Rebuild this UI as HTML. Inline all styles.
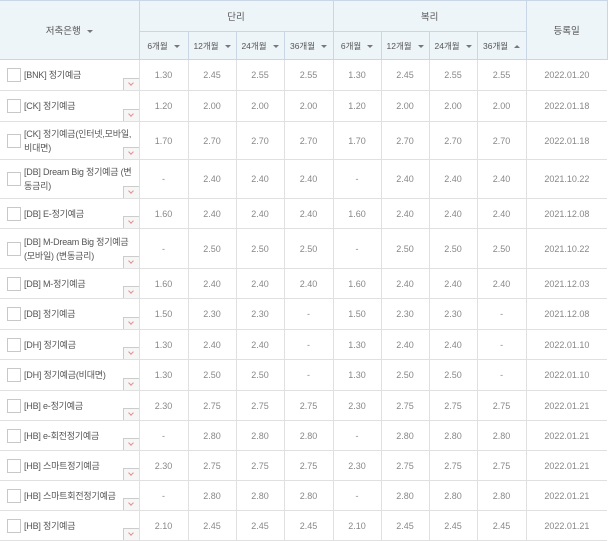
<!DOCTYPE html>
<html><head><meta charset="utf-8"><style>
*{margin:0;padding:0;box-sizing:border-box}
body{width:612px;height:541px;overflow:hidden;background:#fff;font-family:"Liberation Sans","Noto Sans CJK KR",sans-serif}
table{position:absolute;left:0;top:0;width:607px;border-collapse:collapse;table-layout:fixed}
th{background:#eef5f8;border:1px solid #c8d6e6;font-weight:normal;font-size:9.5px;color:#555}
th.s{font-size:8.5px}
.ar{display:inline-block;width:0;height:0;border-left:3px solid transparent;border-right:3px solid transparent;border-top:3px solid #777;vertical-align:middle;margin-left:6px}
.up{border-top:none;border-bottom:3px solid #777}
td{border:1px solid #e0e0e0;text-align:center;font-size:9px;color:#888;position:relative;overflow:hidden}
td.n{text-align:left;padding:0 2px 0 24px;color:#555;font-size:9px;letter-spacing:-0.2px;line-height:14px;border-left:none;white-space:normal}
td:last-child{border-right:none}
th:first-child{border-left:none}
.cb{position:absolute;left:7px;top:50%;margin-top:-7px;width:14px;height:14px;border:1px solid #c8c8c8;background:#fff}
.dd{position:absolute;right:0;bottom:0;width:16px;height:12px;border:1px solid #ccc;border-right:none;border-bottom:none;background:#f6f6f6}
.dd:after{content:"";position:absolute;left:5px;top:2px;width:3px;height:3px;border-right:1px solid #e09090;border-bottom:1px solid #e09090;transform:rotate(45deg)}
</style></head><body>
<table>
<colgroup><col style="width:139px"><col style="width:49px"><col style="width:48px"><col style="width:48px"><col style="width:49px"><col style="width:48px"><col style="width:48px"><col style="width:48px"><col style="width:49px"><col style="width:81px"></colgroup>
<tr style="height:31px"><th rowspan="2">저축은행<span class="ar"></span></th><th colspan="4">단리</th><th colspan="4">복리</th><th rowspan="2">등록일</th></tr>
<tr style="height:28px"><th class="s">6개월<span class="ar"></span></th><th class="s">12개월<span class="ar"></span></th><th class="s">24개월<span class="ar"></span></th><th class="s">36개월<span class="ar"></span></th><th class="s">6개월<span class="ar"></span></th><th class="s">12개월<span class="ar"></span></th><th class="s">24개월<span class="ar"></span></th><th class="s">36개월<span class="ar up"></span></th></tr>
<tr style="height:31px"><td class="n"><span class="cb"></span>[BNK] 정기예금<span class="dd"></span></td><td>1.30</td><td>2.45</td><td>2.55</td><td>2.55</td><td>1.30</td><td>2.45</td><td>2.55</td><td>2.55</td><td>2022.01.20</td></tr>
<tr style="height:31px"><td class="n"><span class="cb"></span>[CK] 정기예금<span class="dd"></span></td><td>1.20</td><td>2.00</td><td>2.00</td><td>2.00</td><td>1.20</td><td>2.00</td><td>2.00</td><td>2.00</td><td>2022.01.18</td></tr>
<tr style="height:38px"><td class="n"><span class="cb"></span><span style="white-space:nowrap">[CK] 정기예금(인터넷,모바일,</span><br>비대면)<span class="dd"></span></td><td>1.70</td><td>2.70</td><td>2.70</td><td>2.70</td><td>1.70</td><td>2.70</td><td>2.70</td><td>2.70</td><td>2022.01.18</td></tr>
<tr style="height:39px"><td class="n"><span class="cb"></span><span style="white-space:nowrap">[DB] Dream Big 정기예금 (변</span><br>동금리)<span class="dd"></span></td><td>-</td><td>2.40</td><td>2.40</td><td>2.40</td><td>-</td><td>2.40</td><td>2.40</td><td>2.40</td><td>2021.10.22</td></tr>
<tr style="height:30px"><td class="n"><span class="cb"></span>[DB] E-정기예금<span class="dd"></span></td><td>1.60</td><td>2.40</td><td>2.40</td><td>2.40</td><td>1.60</td><td>2.40</td><td>2.40</td><td>2.40</td><td>2021.12.08</td></tr>
<tr style="height:40px"><td class="n"><span class="cb"></span><span style="white-space:nowrap">[DB] M-Dream Big 정기예금</span><br>(모바일) (변동금리)<span class="dd"></span></td><td>-</td><td>2.50</td><td>2.50</td><td>2.50</td><td>-</td><td>2.50</td><td>2.50</td><td>2.50</td><td>2021.10.22</td></tr>
<tr style="height:30px"><td class="n"><span class="cb"></span>[DB] M-정기예금<span class="dd"></span></td><td>1.60</td><td>2.40</td><td>2.40</td><td>2.40</td><td>1.60</td><td>2.40</td><td>2.40</td><td>2.40</td><td>2021.12.03</td></tr>
<tr style="height:31px"><td class="n"><span class="cb"></span>[DB] 정기예금<span class="dd"></span></td><td>1.50</td><td>2.30</td><td>2.30</td><td>-</td><td>1.50</td><td>2.30</td><td>2.30</td><td>-</td><td>2021.12.08</td></tr>
<tr style="height:30px"><td class="n"><span class="cb"></span>[DH] 정기예금<span class="dd"></span></td><td>1.30</td><td>2.40</td><td>2.40</td><td>-</td><td>1.30</td><td>2.40</td><td>2.40</td><td>-</td><td>2022.01.10</td></tr>
<tr style="height:31px"><td class="n"><span class="cb"></span>[DH] 정기예금(비대면)<span class="dd"></span></td><td>1.30</td><td>2.50</td><td>2.50</td><td>-</td><td>1.30</td><td>2.50</td><td>2.50</td><td>-</td><td>2022.01.10</td></tr>
<tr style="height:30px"><td class="n"><span class="cb"></span>[HB] e-정기예금<span class="dd"></span></td><td>2.30</td><td>2.75</td><td>2.75</td><td>2.75</td><td>2.30</td><td>2.75</td><td>2.75</td><td>2.75</td><td>2022.01.21</td></tr>
<tr style="height:30px"><td class="n"><span class="cb"></span>[HB] e-회전정기예금<span class="dd"></span></td><td>-</td><td>2.80</td><td>2.80</td><td>2.80</td><td>-</td><td>2.80</td><td>2.80</td><td>2.80</td><td>2022.01.21</td></tr>
<tr style="height:30px"><td class="n"><span class="cb"></span>[HB] 스마트정기예금<span class="dd"></span></td><td>2.30</td><td>2.75</td><td>2.75</td><td>2.75</td><td>2.30</td><td>2.75</td><td>2.75</td><td>2.75</td><td>2022.01.21</td></tr>
<tr style="height:30px"><td class="n"><span class="cb"></span><span style="white-space:nowrap">[HB] 스마트회전정기예금</span><span class="dd"></span></td><td>-</td><td>2.80</td><td>2.80</td><td>2.80</td><td>-</td><td>2.80</td><td>2.80</td><td>2.80</td><td>2022.01.21</td></tr>
<tr style="height:30px"><td class="n"><span class="cb"></span>[HB] 정기예금<span class="dd"></span></td><td>2.10</td><td>2.45</td><td>2.45</td><td>2.45</td><td>2.10</td><td>2.45</td><td>2.45</td><td>2.45</td><td>2022.01.21</td></tr>
</table>
</body></html>
